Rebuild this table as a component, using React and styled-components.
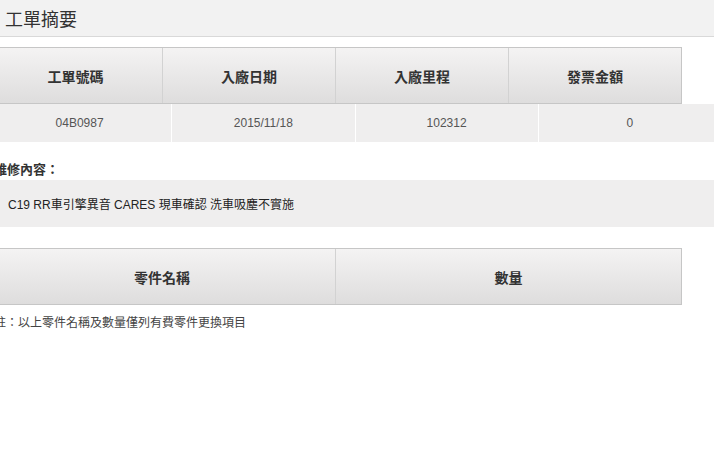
import styled, { createGlobalStyle } from "styled-components";

const GlobalStyle = createGlobalStyle`
    html, body {
        margin: 0;
        padding: 0;
        background: #FFFFFF;
        overflow: hidden;
    }
    body {
        font-family: "Liberation Sans", "Noto Sans CJK TC", sans-serif;
        color: #333333;
    }
`;

const Page = styled.div`
    width: 714px;
    height: 452px;
    overflow: hidden;
`;

const TitleBar = styled.div`
    height: 36px;
    background: #F2F2F2;
    border-bottom: 1px solid #D9D9D9;
    display: flex;
    align-items: center;
    padding-left: 5px;
`;

const Title = styled.h1`
    margin: 0;
    font-size: 18px;
    font-weight: normal;
    color: #333333;
    letter-spacing: 0px;
`;

const Content = styled.div`
    margin-left: -12px;
    padding-top: 10px;
    display: flex;
    flex-direction: column;
`;

const HeadRow = styled.div`
    width: ${props => props.width}px;
    height: 55px;
    display: grid;
    grid-template-columns: repeat(${props => props.cols}, 1fr);
    border: 1px solid #C6C6C6;
    background: linear-gradient(to bottom, #F4F3F3 0%, #E9E8E8 50%, #DEDDDD 100%);
`;

const HeadCell = styled.div`
    display: flex;
    align-items: center;
    justify-content: center;
    font-size: 14px;
    font-weight: bold;
    color: #333333;
    border-left: 1px solid #D2D2D2;
    &:first-child {
        border-left: none;
    }
`;

const DataRow = styled.div`
    width: 733px;
    height: 38px;
    display: grid;
    grid-template-columns: repeat(4, 1fr);
    background: #EFEEEE;
`;

const DataCell = styled.div`
    display: flex;
    align-items: center;
    justify-content: center;
    font-size: 12px;
    color: #555555;
    border-left: 1px solid #FFFFFF;
    &:first-child {
        border-left: none;
    }
`;

const Label = styled.p`
    margin: 0;
    padding: 17px 0 0 6px;
    height: 21px;
    font-size: 13px;
    font-weight: bold;
    color: #333333;
`;

const Memo = styled.div`
    width: 706px;
    height: 47px;
    background: #EFEEEE;
    display: flex;
    align-items: center;
    padding-left: 20px;
    font-size: 12px;
    color: #222222;
    margin-bottom: 21px;
`;

const Note = styled.p`
    margin: 0;
    padding: 8px 0 0 6px;
    font-size: 12px;
    color: #444444;
`;

const heads = ["工單號碼", "入廠日期", "入廠里程", "發票金額"];
const values = ["04B0987", "2015/11/18", "102312", "0"];

function App() {
    return (
        <>
            <GlobalStyle />
            <Page>
                <TitleBar>
                    <Title>工單摘要</Title>
                </TitleBar>
                <Content>
                    <HeadRow width={692} cols={4}>
                        {heads.map(h => <HeadCell key={h}>{h}</HeadCell>)}
                    </HeadRow>
                    <DataRow>
                        {values.map(v => <DataCell key={v}>{v}</DataCell>)}
                    </DataRow>
                    <Label>維修內容：</Label>
                    <Memo>C19 RR車引擎異音 CARES 現車確認 洗車吸塵不實施</Memo>
                    <HeadRow width={692} cols={2}>
                        <HeadCell>零件名稱</HeadCell>
                        <HeadCell>數量</HeadCell>
                    </HeadRow>
                    <Note>註：以上零件名稱及數量僅列有費零件更換項目</Note>
                </Content>
            </Page>
        </>
    );
}

export default App;
